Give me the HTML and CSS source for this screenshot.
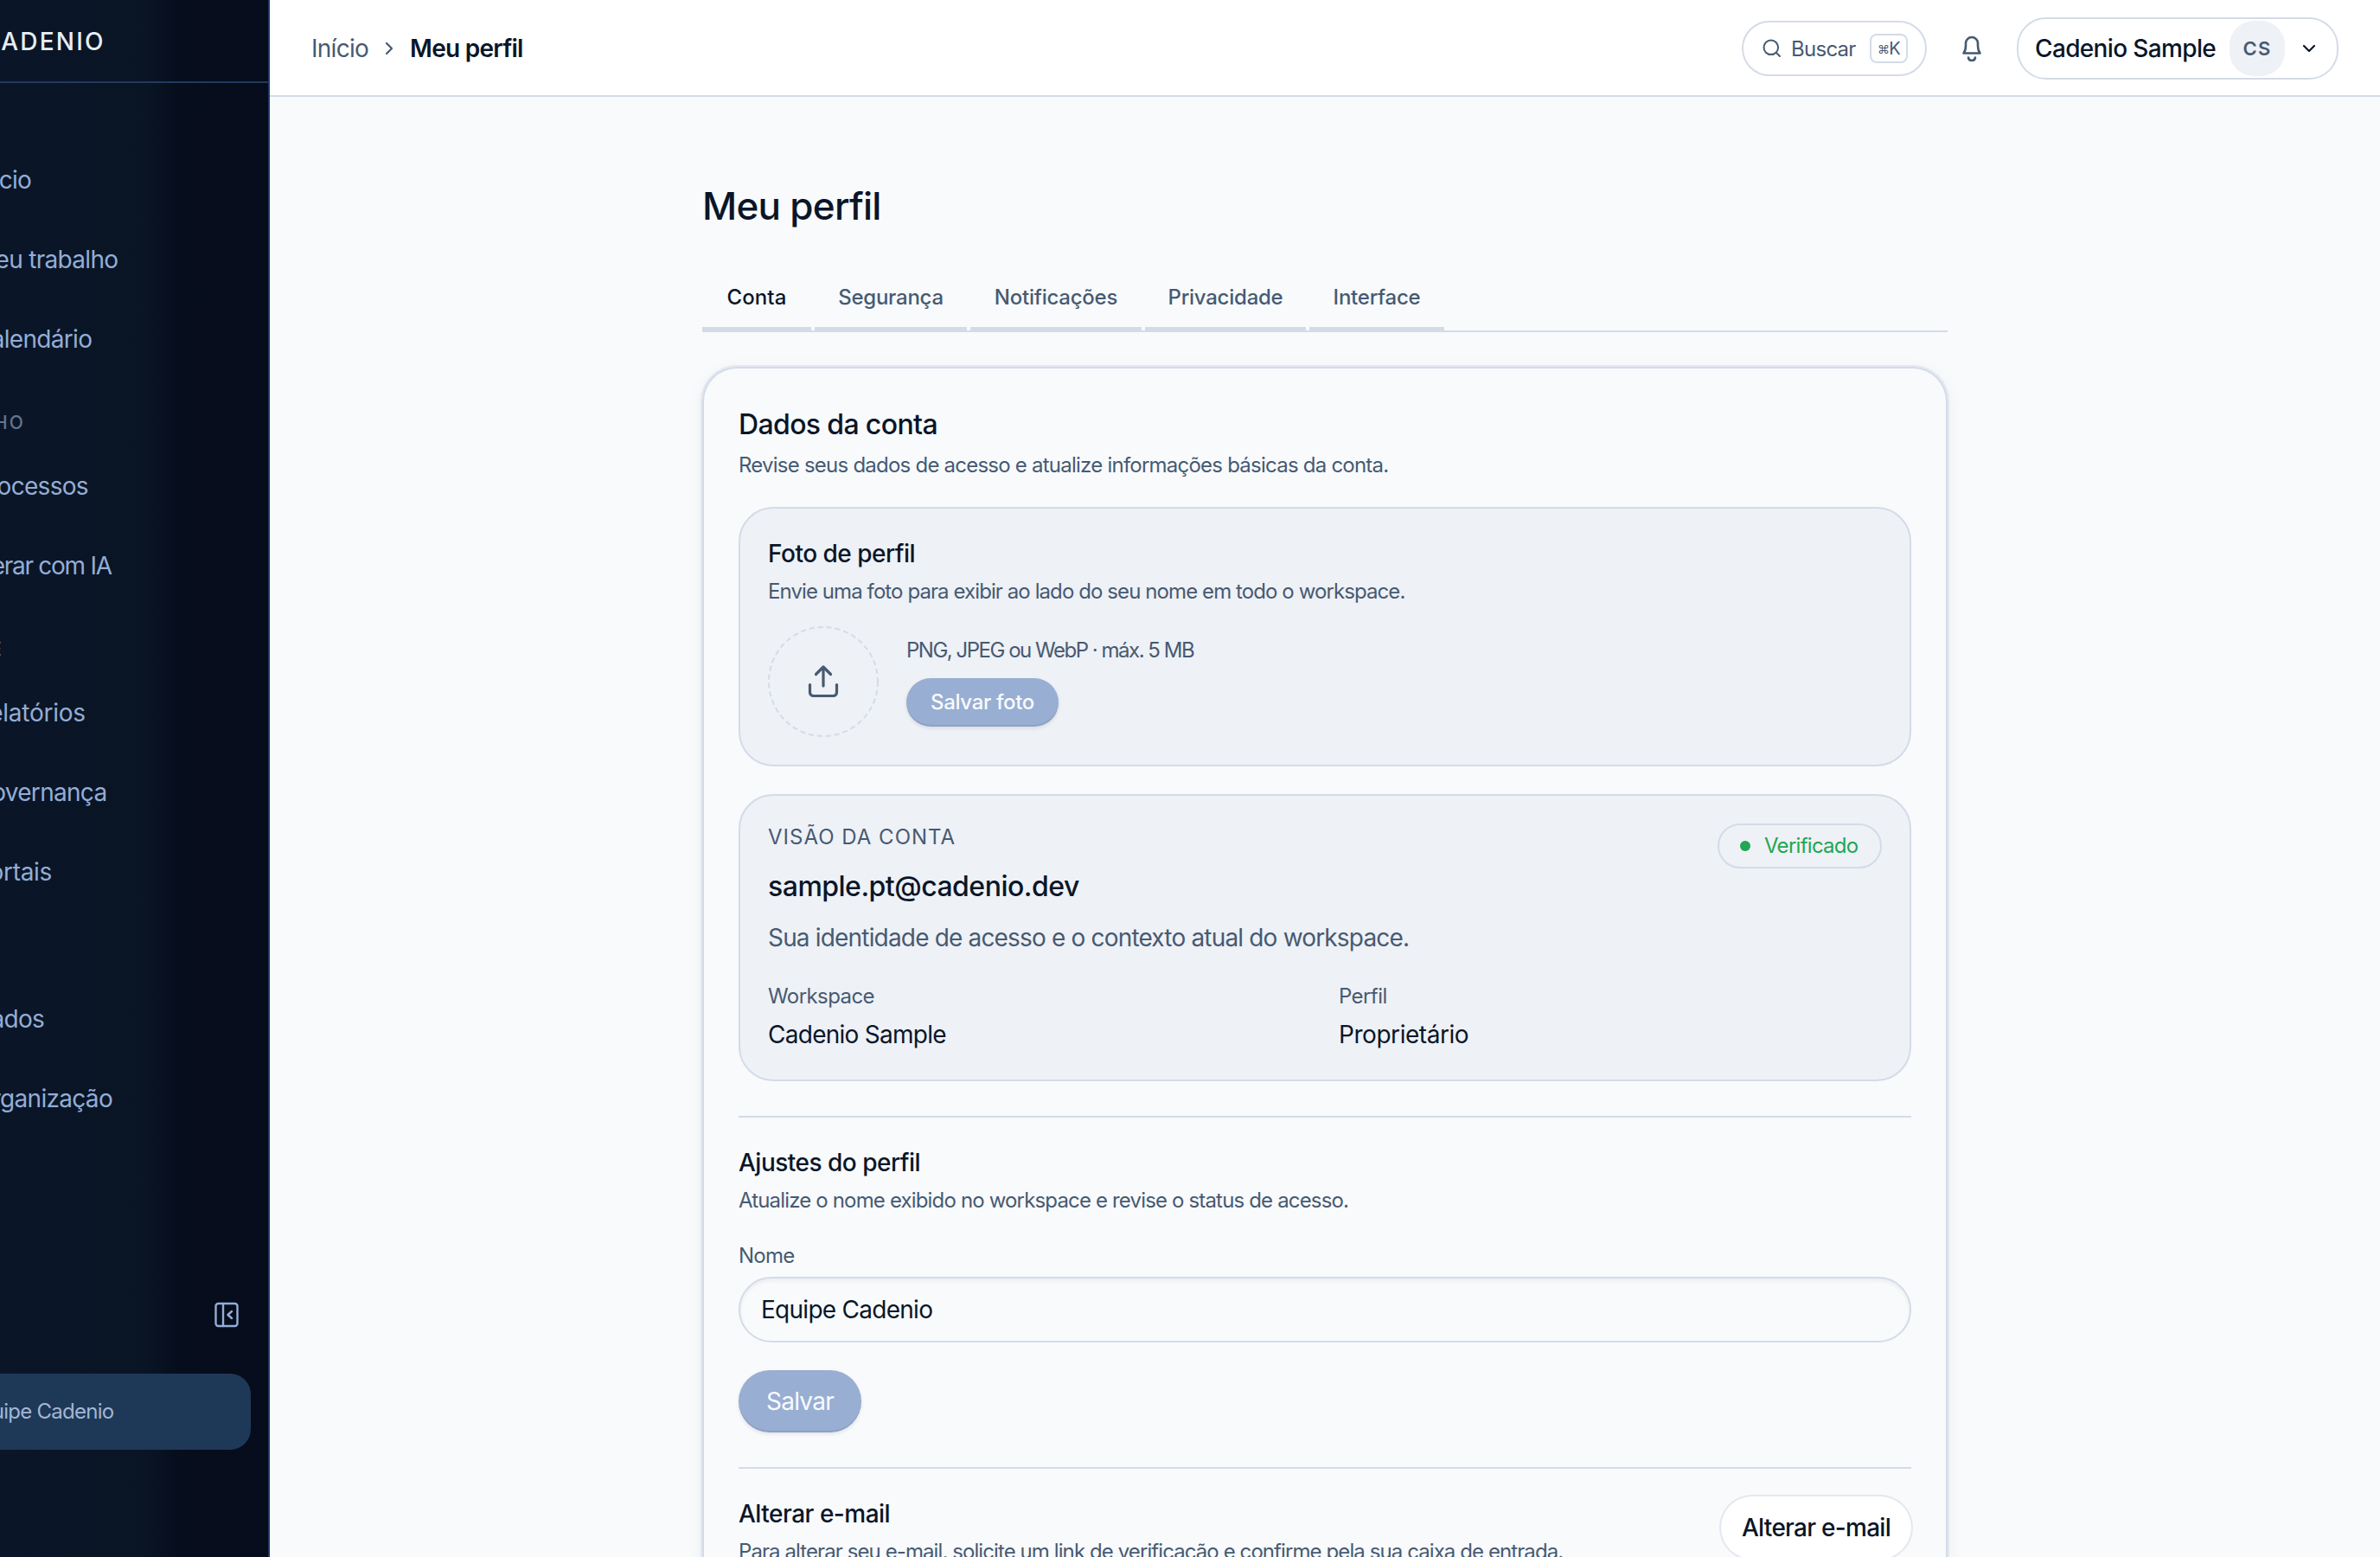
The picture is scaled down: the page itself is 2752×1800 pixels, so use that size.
FILE: index.html
```html
<!DOCTYPE html>
<html lang="pt-BR">
  <head>
    <meta charset="UTF-8" />
    <meta name="viewport" content="width=device-width, initial-scale=1.0" />
    <title>Meu perfil - Cadenio</title>
    <link rel="stylesheet" href="styles.css">
  </head>
  <body>
    <aside class="sidebar">
      <div class="brand">CADENIO</div>
      <nav class="nav">
        <a href="#" class="nav-item">Início</a>
        <a href="#" class="nav-item">Meu trabalho</a>
        <a href="#" class="nav-item">Calendário</a>
        <div class="nav-section">TRABALHO</div>
        <a href="#" class="nav-item">Processos</a>
        <a href="#" class="nav-item nav-item-tight">Gerar com IA</a>
        <div class="nav-section nav-section-short">ANÁLISE</div>
        <a href="#" class="nav-item nav-item-wide">Relatórios</a>
        <a href="#" class="nav-item">Governança</a>
        <a href="#" class="nav-item nav-item-wide">Portais</a>
        <div class="nav-section"></div>
        <a href="#" class="nav-item">Dados</a>
        <a href="#" class="nav-item">Organização</a>
      </nav>
      <div class="sidebar-footer">
        <button type="button" class="collapse" aria-label="Recolher menu">
          <svg width="28" height="30" viewBox="0 0 28 30" fill="none" stroke="currentColor" stroke-width="2.4" stroke-linecap="round" stroke-linejoin="round">
            <rect x="1.5" y="2" width="25" height="26" rx="3" />
            <path d="M10 2v26M20 11l-4.500 4 4.500 4" />
          </svg>
        </button>
        <div class="sidebar-user">Equipe Cadenio</div>
      </div>
    </aside>

    <div class="page">
      <header class="topbar">
        <div class="breadcrumb">
          <a href="#">Início</a>
          <svg width="10" height="16" viewBox="0 0 10 16" fill="none" stroke="currentColor" stroke-width="2.2" stroke-linecap="round" stroke-linejoin="round">
            <path d="M2 2l6 6-6 6" />
          </svg>
          <strong>Meu perfil</strong>
        </div>
        <div class="topbar-actions">
          <button type="button" class="search">
            <svg width="22" height="22" viewBox="0 0 22 22" fill="none" stroke="currentColor" stroke-width="2" stroke-linecap="round">
              <circle cx="9.8" cy="9.8" r="8.3" />
              <path d="M16 16l4 4" />
            </svg>
            <span class="search-label">Buscar</span>
            <kbd><span class="cmd">⌘</span>K</kbd>
          </button>
          <button type="button" class="bell" aria-label="Notificações">
            <svg width="24" height="32" viewBox="0 0 24 32" fill="none" stroke="currentColor" stroke-width="2.6" stroke-linecap="round" stroke-linejoin="round">
              <path d="M2.500 21.500h19c-2-2.600-2.500-5-2.500-8.500V10a7 7 0 0 0-14 0v3c0 3.500-.5 5.900-2.500 8.500z" />
              <path d="M8 26.500c.3 2.200 1.800 3.500 4 3.500s3.700-1.300 4-3.500" />
            </svg>
          </button>
          <button type="button" class="account">
            <span class="account-name">Cadenio Sample</span>
            <span class="avatar">CS</span>
            <svg width="16" height="10" viewBox="0 0 16 10" fill="none" stroke="currentColor" stroke-width="2.2" stroke-linecap="round" stroke-linejoin="round">
              <path d="M2 2l6 6 6-6" />
            </svg>
          </button>
        </div>
      </header>

      <main class="content">
        <h1>Meu perfil</h1>
        <div class="tabs">
          <a href="#" class="tab active">Conta</a>
          <a href="#" class="tab">Segurança</a>
          <a href="#" class="tab">Notificações</a>
          <a href="#" class="tab">Privacidade</a>
          <a href="#" class="tab">Interface</a>
        </div>

        <div class="card">
          <h2>Dados da conta</h2>
          <p class="hint card-hint">Revise seus dados de acesso e atualize informações básicas da conta.</p>

          <section class="box photo-box">
            <h3>Foto de perfil</h3>
            <p class="hint photo-hint">Envie uma foto para exibir ao lado do seu nome em todo o workspace.</p>
            <div class="photo-row">
              <div class="dropzone">
                <svg width="128" height="128" viewBox="0 0 128 128" fill="none">
                  <circle class="dropzone-ring" cx="64" cy="64" r="63" />
                  <path class="dropzone-icon" d="M64 69V47.500M55.500 55.500l8.500-8.500 8.500 8.500M48.500 67.500v9a4 4 0 0 0 4 4h23a4 4 0 0 0 4-4v-9" />
                </svg>
              </div>
              <div class="photo-info">
                <p class="photo-formats">PNG, JPEG ou WebP · máx. 5 MB</p>
                <button type="button" class="btn btn-small">Salvar foto</button>
              </div>
            </div>
          </section>

          <section class="box overview-box">
            <div class="overview-head">
              <div>
                <p class="eyebrow">VISÃO DA CONTA</p>
                <p class="email">sample.pt@cadenio.dev</p>
                <p class="overview-text">Sua identidade de acesso e o contexto atual do workspace.</p>
              </div>
              <span class="badge">Verificado</span>
            </div>
            <dl class="facts">
              <div>
                <dt>Workspace</dt>
                <dd>Cadenio Sample</dd>
              </div>
              <div>
                <dt>Perfil</dt>
                <dd class="role">Proprietário</dd>
              </div>
            </dl>
          </section>

          <section class="section">
            <h3>Ajustes do perfil</h3>
            <p class="hint">Atualize o nome exibido no workspace e revise o status de acesso.</p>
            <label for="name">Nome</label>
            <input type="text" id="name" name="name" value="Equipe Cadenio" />
            <button type="button" class="btn">Salvar</button>
          </section>

          <section class="section email-section">
            <div>
              <h3>Alterar e-mail</h3>
              <p class="hint email-hint">Para alterar seu e-mail, solicite um link de verificação e confirme pela sua caixa de entrada.</p>
            </div>
            <button type="button" class="btn-outline">Alterar e-mail</button>
          </section>
        </div>
      </main>
    </div>
  </body>
</html>
```
FILE: styles.css
```css
* {
  box-sizing: border-box;
}

body {
  margin: 0;
  height: 1800px;
  display: flex;
  overflow: hidden;
  font-family: Inter, "Liberation Sans", sans-serif;
  font-size: 28px;
  font-weight: 380;
  letter-spacing: -0.026em;
  color: #0a1628;
  background-color: #f8fafc;
}

h1,
h2,
h3,
p,
dl,
dd {
  margin: 0;
}

a {
  color: inherit;
  text-decoration: none;
}

button {
  font: inherit;
  letter-spacing: inherit;
  color: inherit;
  border: none;
  padding: 0;
  background: none;
  cursor: pointer;
}

svg {
  display: block;
  flex-shrink: 0;
}

/* Sidebar */
.sidebar {
  width: 312px;
  flex-shrink: 0;
  display: flex;
  flex-direction: column;
  overflow: hidden;
  color: #94add6;
  background: linear-gradient(90deg, #0a1628 0%, #091424 55%, #060d1c 68%, #060c1b 100%);
  border-right: 2px solid #1e3a5f;
}

.brand {
  height: 96px;
  padding-top: 1px;
  display: flex;
  align-items: center;
  margin-left: -21px;
  color: #e8edf5;
  font-weight: 500;
  letter-spacing: 0.08em;
  border-bottom: 2px solid #1e3a5f;
}

.nav {
  flex: 1;
  margin-left: -30px;
  padding-top: 66px;
  white-space: nowrap;
}

.nav-item {
  display: flex;
  align-items: center;
  height: 92px;
  font-weight: 400;
  letter-spacing: -0.025em;
}

.nav-item-wide {
  letter-spacing: -0.01em;
}

.nav-item-tight {
  letter-spacing: -0.045em;
}

.nav-section {
  width: 160px;
  height: 78px;
  margin-left: -101px;
  padding-top: 38px;
  text-align: right;
  font-size: 21px;
  font-weight: 450;
  line-height: 26px;
  letter-spacing: 0.1em;
  color: #64748b;
}

.nav-section-short {
  margin-left: -126px;
}

.sidebar-footer {
  height: 312px;
  padding-right: 20px;
}

.collapse {
  display: block;
  margin: 17px 14px 53px auto;
  color: #94add6;
}

.sidebar-user {
  height: 88px;
  margin-left: -60px;
  padding: 0 0 2px 23px;
  display: flex;
  align-items: center;
  font-size: 24px;
  font-weight: 400;
  color: #a3b6d3;
  background-color: #1e3858;
  border-radius: 24px;
}

/* Topbar */
.page {
  flex: 1;
  min-width: 0;
  overflow: hidden;
}

.topbar {
  height: 112px;
  padding: 2px 48px 0;
  display: flex;
  align-items: center;
  justify-content: space-between;
  background-color: #fff;
  border-bottom: 2px solid #d4dbe8;
}

.breadcrumb {
  display: flex;
  align-items: center;
  gap: 19px;
  color: #475a72;
}

.breadcrumb strong {
  font-weight: 560;
  color: #0a1628;
}

.topbar-actions {
  display: flex;
  align-items: center;
}

.search {
  width: 214px;
  height: 64px;
  padding: 0 20px 0 22px;
  display: flex;
  align-items: center;
  border: 2px solid #d4dbe8;
  border-radius: 32px;
  color: #475a72;
  font-size: 24px;
}

.search-label {
  margin-left: 11px;
}

kbd {
  margin-left: auto;
  width: 44px;
  height: 34px;
  display: flex;
  align-items: center;
  justify-content: center;
  border: 2px solid #d4dbe8;
  border-radius: 8px;
  font-family: inherit;
  font-size: 20px;
}

.cmd {
  font-size: 14px;
}

.bell {
  margin: 0 40px;
  color: #475a72;
}

.account {
  width: 372px;
  height: 72px;
  padding: 0 24px 0 19px;
  display: flex;
  align-items: center;
  border: 2px solid #d4dbe8;
  border-radius: 34px;
}

.account-name {
  font-weight: 460;
  letter-spacing: -0.023em;
}

.avatar {
  width: 64px;
  height: 64px;
  margin: 0 20px 0 auto;
  display: flex;
  align-items: center;
  justify-content: center;
  border-radius: 28px;
  background-color: #eef1f6;
  color: #475a72;
  font-size: 22px;
  font-weight: 600;
  letter-spacing: 0.06em;
}

/* Content */
.content {
  width: 1440px;
  margin: 0 auto;
  padding-top: 94px;
}

h1 {
  font-size: 44px;
  line-height: 64px;
  font-weight: 550;
}

.tabs {
  display: grid;
  grid-template-columns: 126px 176px 198px 186px 156px;
  gap: 4px;
  margin-top: 38px;
  border-bottom: 2px solid #d4dbe8;
}

.tab {
  padding: 18px 0 16px;
  text-align: center;
  font-size: 24px;
  line-height: 36px;
  font-weight: 480;
  letter-spacing: -0.01em;
  color: #475a72;
  border-bottom: 4px solid #d4dbe8;
}

.tab.active {
  color: #0a1628;
  letter-spacing: 0.005em;
}

.card {
  margin-top: 40px;
  padding: 41px 40px 0;
  border: 2px solid #d4dbe8;
  border-bottom: none;
  border-radius: 40px 40px 0 0;
  box-shadow: 0 0 0 2px rgba(212, 219, 232, 0.5), 0 4px 20px rgba(10, 22, 40, 0.06);
}

h2 {
  font-size: 32px;
  line-height: 48px;
  font-weight: 550;
  letter-spacing: -0.02em;
}

h3 {
  font-size: 28px;
  line-height: 40px;
  font-weight: 550;
  letter-spacing: -0.018em;
}

.hint {
  margin-top: 6px;
  font-size: 24px;
  line-height: 36px;
  letter-spacing: -0.035em;
  color: #475a72;
}

.card-hint {
  margin-top: 5px;
  letter-spacing: -0.032em;
}

.photo-hint,
.email-hint {
  letter-spacing: -0.038em;
}

.box {
  margin-top: 32px;
  padding: 32px;
  background-color: #eef1f6;
  border: 2px solid #d4dbe8;
  border-radius: 40px;
}

.photo-box {
  margin-top: 30px;
}

.photo-row {
  display: flex;
  align-items: center;
  gap: 32px;
  margin-top: 22px;
}

.dropzone-ring {
  stroke: #d4dbe8;
  stroke-width: 2;
  stroke-dasharray: 6 4;
}

.dropzone-icon {
  stroke: #475a72;
  stroke-width: 3.2;
  stroke-linecap: round;
  stroke-linejoin: round;
}

.photo-formats {
  margin-bottom: 16px;
  font-size: 24px;
  line-height: 32px;
  letter-spacing: -0.062em;
  color: #475a72;
}

.btn {
  display: block;
  width: 142px;
  height: 72px;
  border-radius: 36px;
  color: #f8fafc;
  background-color: #98aed3;
  box-shadow: 0 2px 4px rgba(10, 22, 40, 0.1), inset 0 -2px 0 rgba(71, 90, 114, 0.15);
}

.btn-small {
  width: 176px;
  height: 56px;
  padding-bottom: 2px;
  border-radius: 28px;
  font-size: 24px;
  font-weight: 460;
  letter-spacing: -0.014em;
}

.overview-head {
  display: flex;
  justify-content: space-between;
  align-items: flex-start;
}

.eyebrow {
  font-size: 24px;
  line-height: 32px;
  letter-spacing: 0.042em;
  color: #475a72;
}

.email {
  margin-top: 17px;
  font-size: 32px;
  line-height: 48px;
  font-weight: 550;
  letter-spacing: -0.016em;
}

.overview-text {
  margin-top: 13px;
  line-height: 44px;
  letter-spacing: -0.0295em;
  color: #475a72;
}

.badge {
  width: 190px;
  height: 52px;
  display: flex;
  align-items: center;
  gap: 16px;
  padding: 0 0 1px 24px;
  border: 2px solid #d4dbe8;
  border-radius: 26px;
  color: #22a652;
  font-size: 24px;
  font-weight: 440;
}

.badge::before {
  content: "";
  width: 12px;
  height: 12px;
  border-radius: 50%;
  background-color: #22a652;
}

.facts {
  display: grid;
  grid-template-columns: 1fr 1fr;
  gap: 32px;
  margin-top: 28px;
}

dt {
  font-size: 24px;
  line-height: 36px;
  letter-spacing: -0.024em;
  color: #475a72;
}

dd {
  margin-top: 6px;
  line-height: 40px;
}

.role {
  letter-spacing: -0.016em;
}

.section {
  margin-top: 40px;
  padding-top: 32px;
  border-top: 2px solid #d4dbe8;
}

label {
  display: block;
  margin-top: 28px;
  font-size: 24px;
  line-height: 36px;
  color: #475a72;
}

input {
  display: block;
  width: 100%;
  height: 76px;
  margin: 6px 0 32px;
  padding: 0 24px;
  font: inherit;
  letter-spacing: inherit;
  color: inherit;
  background: none;
  border: 2px solid #d4dbe8;
  border-radius: 38px;
  box-shadow: inset 0 3px 4px rgba(10, 22, 40, 0.05);
}

.email-section {
  display: flex;
  justify-content: space-between;
  align-items: flex-start;
}

.btn-outline {
  width: 220px;
  height: 72px;
  border-radius: 36px;
  background-color: #fff;
  box-shadow: 0 0 0 2px #e3e8ef;
  font-weight: 460;
}
```
